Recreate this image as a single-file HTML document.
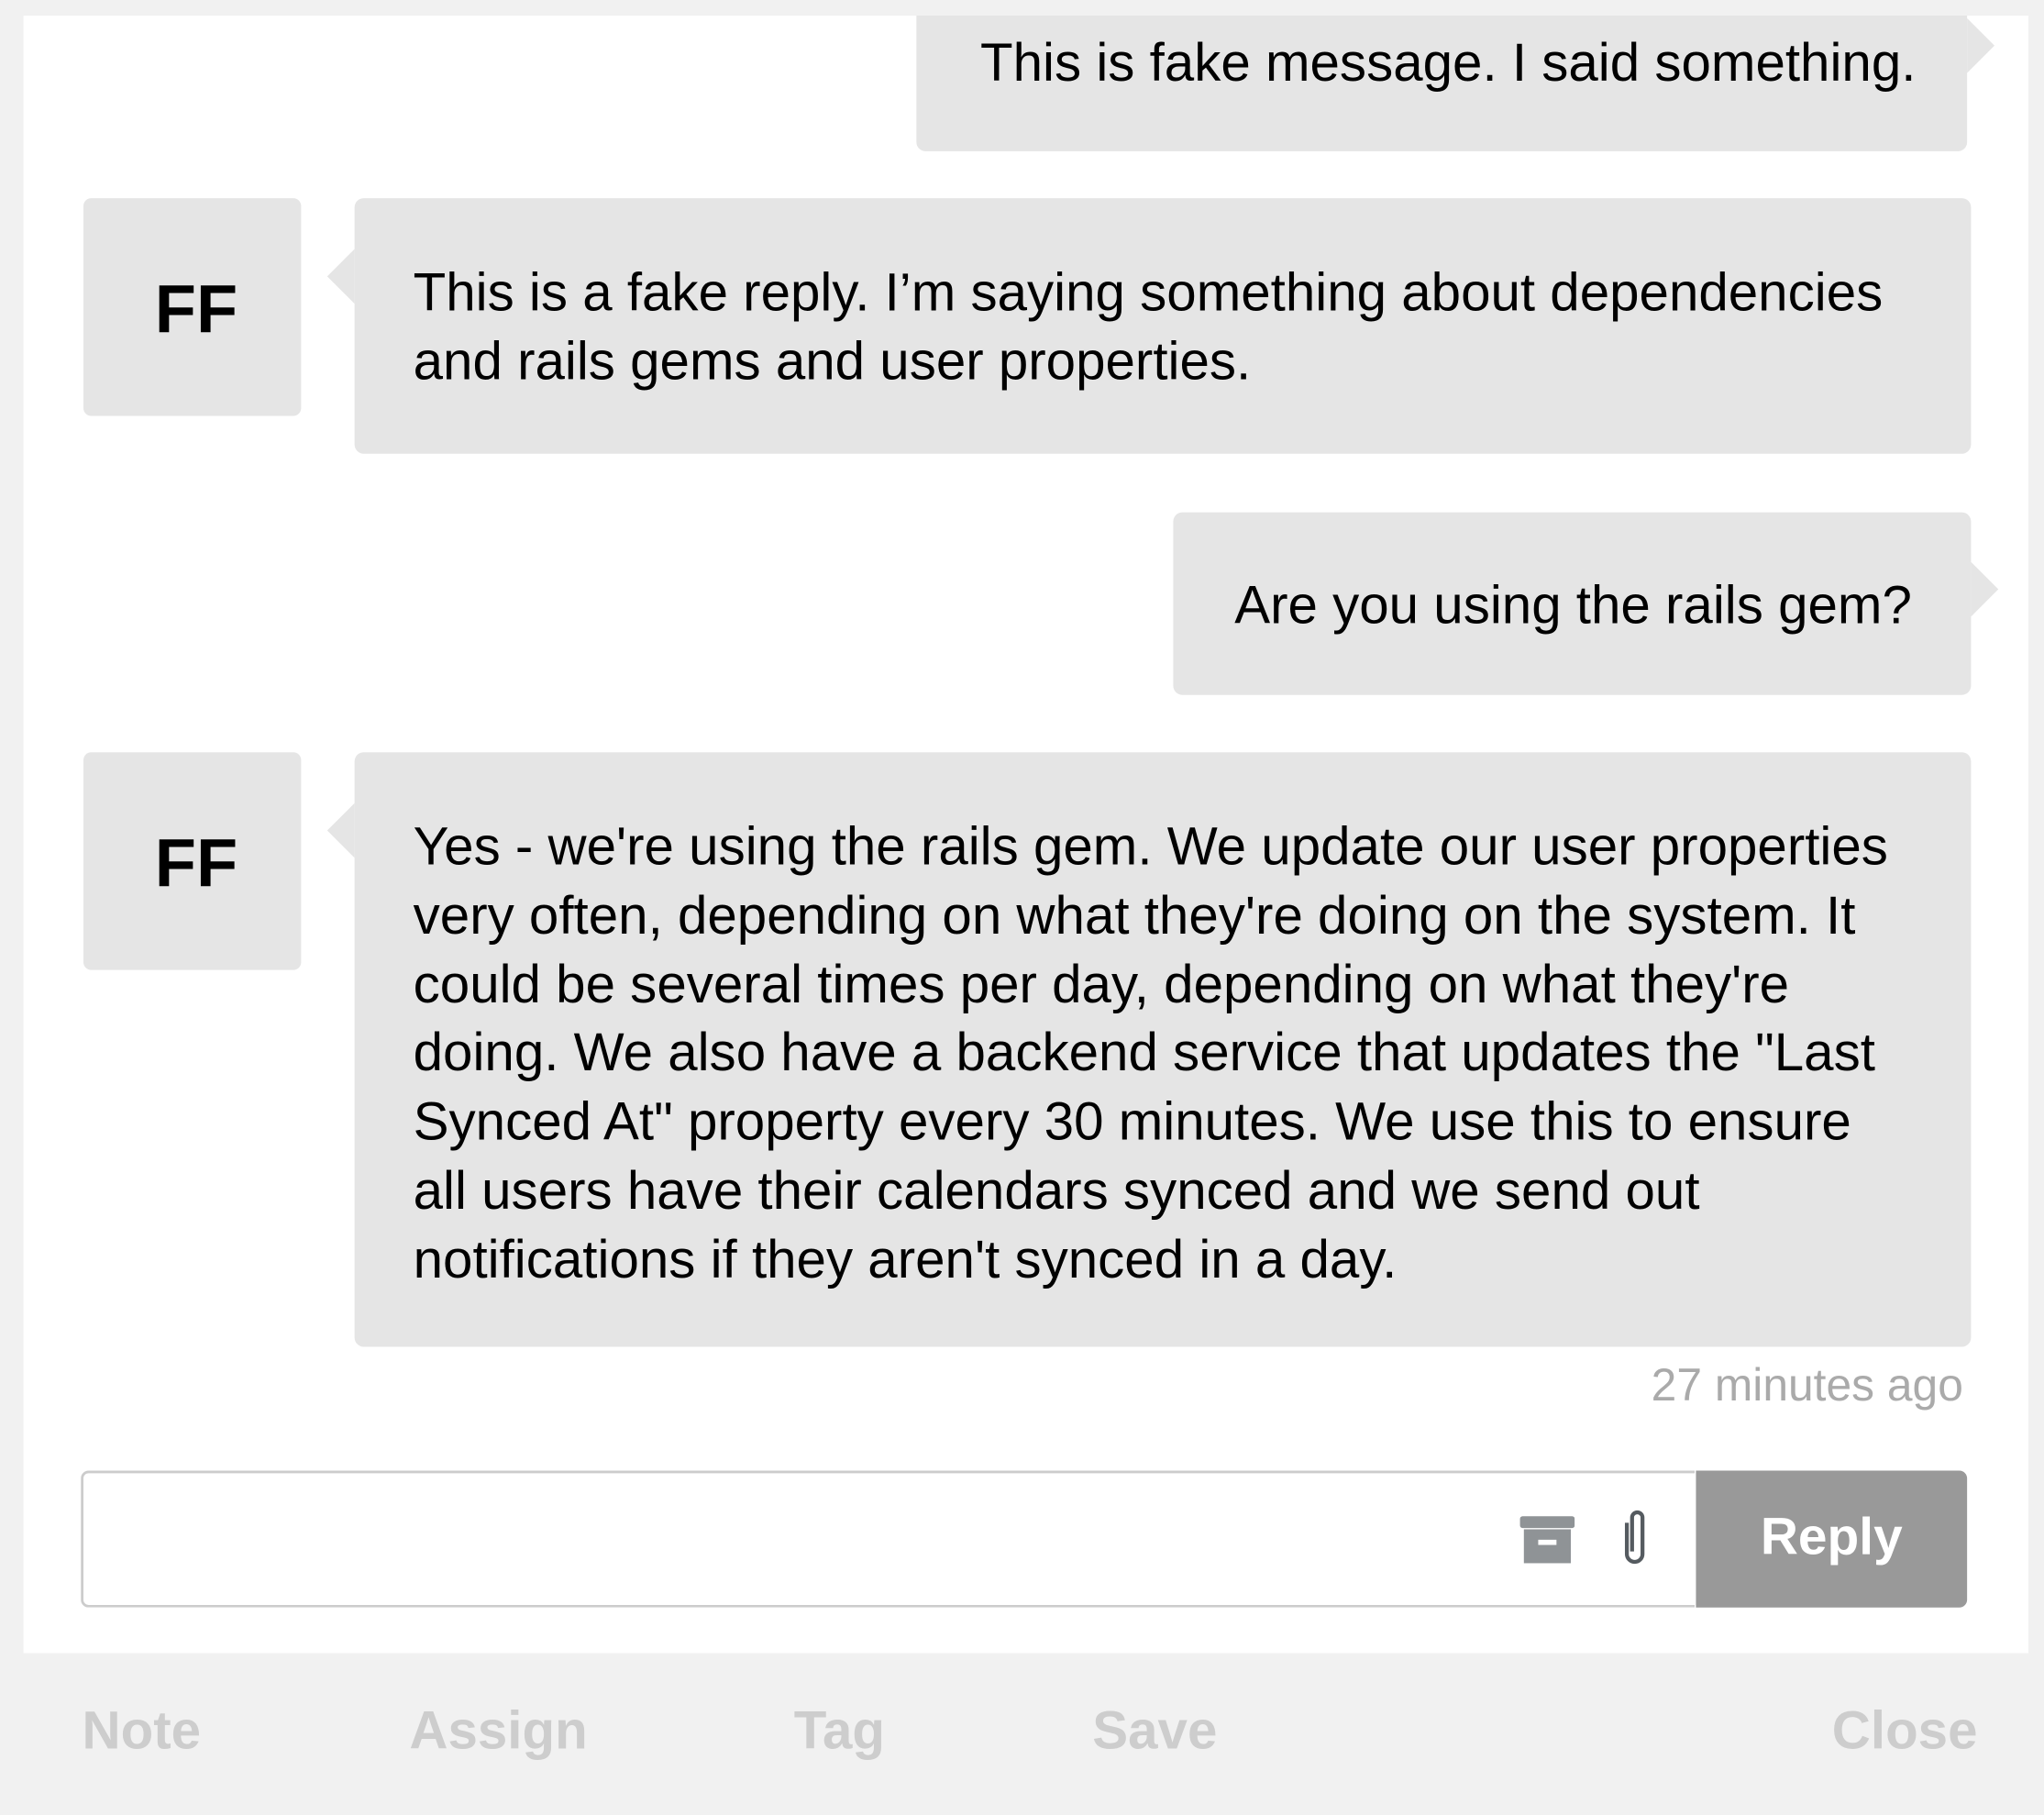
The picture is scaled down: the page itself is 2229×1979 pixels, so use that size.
<!DOCTYPE html>
<html><head><meta charset="utf-8"><style>
html,body{margin:0;padding:0;background:#f1f1f1;width:2229px;height:1979px;overflow:hidden}
#s{position:absolute;left:0;top:0;width:1568px;height:1392px;transform:scale(1.42156);transform-origin:0 0;font-family:"Liberation Sans",Arial,sans-serif}
.panel{position:absolute;left:18px;top:12px;width:1538px;height:1256px;background:#fff;overflow:hidden}
.b{position:absolute;background:#e5e5e5;border-radius:7px;color:#000;font-size:41px;white-space:nowrap}
.av{position:absolute;left:46px;width:167px;height:167px;background:#e5e5e5;border-radius:6px;font-weight:bold;font-size:52px;text-align:center;line-height:173px;box-sizing:border-box;padding-left:6px}
.al{position:absolute;width:0;height:0;border-top:21px solid transparent;border-bottom:21px solid transparent;border-right:21px solid #e5e5e5}
.ar{position:absolute;width:0;height:0;border-top:21px solid transparent;border-bottom:21px solid transparent;border-left:21px solid #e5e5e5}
.t{position:absolute;line-height:52.8px}
.nav{position:absolute;top:1304px;font-weight:bold;font-size:41px;color:#cdcdcd}
</style></head><body><div id="s">
<div class="panel">
  <div class="b" style="left:685px;top:-20px;width:806px;height:124px"><div class="t" style="left:49px;top:30px">This is fake message. I said something.</div></div>
  <div class="ar" style="left:1491px;top:2px"></div>

  <div class="av" style="top:140px">FF</div>
  <div class="al" style="left:233px;top:179px"></div>
  <div class="b" style="left:254px;top:140px;width:1240px;height:196px"><div class="t" style="left:45px;top:46px">This is a fake reply. I’m saying something about dependencies<br>and rails gems and user properties.</div></div>

  <div class="b" style="left:882px;top:381px;width:612px;height:140px"><div class="t" style="left:47px;top:45px">Are you using the rails gem?</div></div>
  <div class="ar" style="left:1494px;top:419px"></div>

  <div class="av" style="top:565px">FF</div>
  <div class="al" style="left:233px;top:604px"></div>
  <div class="b" style="left:254px;top:565px;width:1240px;height:456px"><div class="t" style="left:45px;top:46px">Yes - we're using the rails gem. We update our user properties<br>very often, depending on what they're doing on the system. It<br>could be several times per day, depending on what they're<br>doing. We also have a backend service that updates the "Last<br>Synced At" property every 30 minutes. We use this to ensure<br>all users have their calendars synced and we send out<br>notifications if they aren't synced in a day.</div></div>

  <div style="position:absolute;right:50px;top:1031px;font-size:35px;color:#aaa">27 minutes ago</div>

  <div style="position:absolute;left:44px;top:1116px;width:1236px;height:101px;border:2px solid #ccc;border-right:none;border-radius:6px 0 0 6px"></div>
  <svg style="position:absolute;left:1148px;top:1150px" width="42" height="38" viewBox="0 0 42 38">
    <rect x="0" y="1" width="42" height="9" rx="2" fill="#8f9396"/>
    <rect x="3" y="11" width="36" height="26" fill="#8f9396"/>
    <rect x="14" y="19" width="14" height="4" fill="#fff"/>
  </svg>
  <svg style="position:absolute;left:1224px;top:1146px" width="24" height="44" viewBox="0 0 24 44">
    <path d="M6 10 V34 a6 6 0 0 0 12 0 V6 a4 4 0 0 0 -8 0 V32" fill="none" stroke="#555b60" stroke-width="3"/>
  </svg>
  <div style="position:absolute;left:1283px;top:1116px;width:208px;height:105px;background:#999;border-radius:0 6px 6px 0;color:#fff;font-weight:bold;font-size:40px;text-align:center;line-height:103px">Reply</div>
</div>
<div class="nav" style="left:63px">Note</div>
<div class="nav" style="left:314px">Assign</div>
<div class="nav" style="left:609px">Tag</div>
<div class="nav" style="left:838px">Save</div>
<div class="nav" style="right:51px">Close</div>
</div></body></html>
